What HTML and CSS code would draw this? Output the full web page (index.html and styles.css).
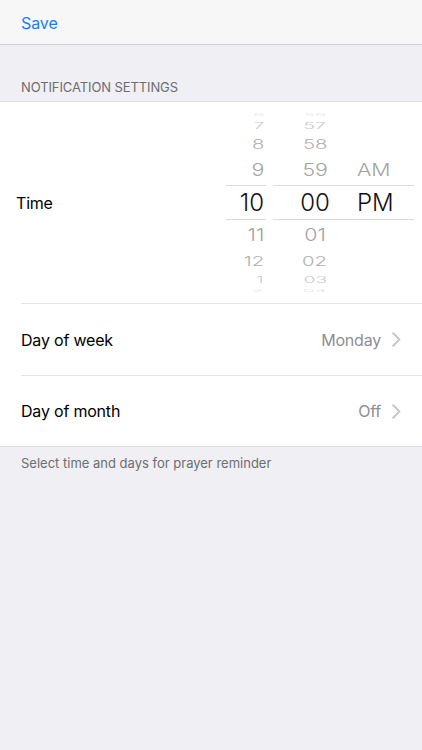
FILE: index.html
```html
<!DOCTYPE html>
<html>
<head>
<meta charset="utf-8">
<link rel="stylesheet" href="styles.css">
</head>
<body>
<div class="nav"><span class="save">Save</span></div>
<div class="section-header">NOTIFICATION SETTINGS</div>
<div class="group">
  <div class="cell">
    <div class="cell-body time-body">
      <div class="time-label">Time</div>
      <div class="picker">
        <div class="col hours">
          <div class="it d4"><span>6</span></div>
          <div class="it d3"><span>7</span></div>
          <div class="it d2"><span>8</span></div>
          <div class="it d1"><span>9</span></div>
          <div class="it d0"><span>10</span></div>
          <div class="it d1"><span>11</span></div>
          <div class="it d2"><span>12</span></div>
          <div class="it d3"><span>1</span></div>
          <div class="it d4"><span>2</span></div>
        </div>
        <div class="col mins">
          <div class="it d4"><span>56</span></div>
          <div class="it d3"><span>57</span></div>
          <div class="it d2"><span>58</span></div>
          <div class="it d1"><span>59</span></div>
          <div class="it d0"><span>00</span></div>
          <div class="it d1"><span>01</span></div>
          <div class="it d2"><span>02</span></div>
          <div class="it d3"><span>03</span></div>
          <div class="it d4"><span>04</span></div>
        </div>
        <div class="col ampm">
          <div class="it d4"></div>
          <div class="it d3"></div>
          <div class="it d2"></div>
          <div class="it d1"><span>AM</span></div>
          <div class="it d0"><span>PM</span></div>
          <div class="it d1"></div>
          <div class="it d2"></div>
          <div class="it d3"></div>
          <div class="it d4"></div>
        </div>
      </div>
    </div>
  </div>
  <div class="cell">
    <div class="cell-body row-body">
      <div class="label">Day of week</div>
      <div class="value">Monday</div>
      <svg class="chev" width="9" height="15" viewBox="0 0 9 15"><polyline points="1.2,1.2 7.5,7.5 1.2,13.8" fill="none" stroke="#c7c7cc" stroke-width="2" stroke-linecap="round" stroke-linejoin="round"/></svg>
    </div>
  </div>
  <div class="cell">
    <div class="cell-body row-body last">
      <div class="label">Day of month</div>
      <div class="value">Off</div>
      <svg class="chev" width="9" height="15" viewBox="0 0 9 15"><polyline points="1.2,1.2 7.5,7.5 1.2,13.8" fill="none" stroke="#c7c7cc" stroke-width="2" stroke-linecap="round" stroke-linejoin="round"/></svg>
    </div>
  </div>
</div>
<div class="footer">Select time and days for prayer reminder</div>
</body>
</html>
```
FILE: styles.css
```css
* { box-sizing: border-box; }
html, body { margin: 0; padding: 0; }
body {
  width: 422px;
  min-height: 750px;
  background: #efeff4;
  font-family: Inter, "Noto Sans", "Liberation Sans", sans-serif;
  color: #000;
}
.nav {
  height: 45px;
  background: #f7f7f7;
  border-bottom: 1px solid #cfcfd3;
  display: flex;
  align-items: center;
  padding-left: 21px;
  padding-top: 1px;
}
.save {
  font-size: 16px;
  color: #157efb;
  letter-spacing: -0.1px;
}
.section-header {
  height: 56px;
  display: flex;
  align-items: flex-end;
  padding: 0 21px 6px;
  font-size: 13px;
  line-height: 16px;
  color: #6d6d72;
  letter-spacing: -0.1px;
}
.group {
  background: #fff;
  border-top: 1px solid #dedee2;
  border-bottom: 1px solid #dedee2;
}
.cell { padding-left: 21px; }
.cell-body {
  display: flex;
  align-items: center;
  border-bottom: 1px solid #e3e3e6;
}
.cell-body.last { border-bottom: none; }
.time-body {
  height: 202px;
  padding-right: 8px;
}
.time-label {
  flex: 1;
  margin-left: -5px;
  font-size: 16px;
  letter-spacing: -0.2px;
}
.picker { display: flex; }
.col { display: flex; flex-direction: column; }
.hours { width: 40px; }
.mins { width: 91px; padding-left: 7px; }
.ampm { width: 57px; }
.it {
  display: flex;
  align-items: center;
  font-size: 22px;
  color: #a3a3a3;
  line-height: 1;
  font-weight: 300;
}
.hours .it { justify-content: flex-end; padding-right: 2px; }
.mins .it { justify-content: center; }
.ampm .it { justify-content: flex-start; }
.it span { display: inline-block; }
.hours .it span { transform-origin: right center; }
.ampm .it span { transform-origin: left center; }
.d0 {
  height: 35px;
  border-top: 1px solid #dcdcdc;
  border-bottom: 1px solid #dcdcdc;
  font-size: 24px;
  color: #111;
}
.d1 { height: 30px; }
.d1 span { transform: scale(0.97, 0.8); }
.d2 { height: 22px; color: #b0b0b0; }
.d2 span { transform: scale(0.92, 0.6); }
.d3 { height: 15px; color: #c9c9c9; }
.d3 span { transform: scale(0.88, 0.4); }
.d4 { height: 7px; color: #e6e6e6; overflow: hidden; }
.d4 span { transform: scale(0.85, 0.18); }
.row-body {
  height: 72px;
  padding-right: 21px;
}
.row-body.last { height: 70px; }
.label {
  flex: 1;
  font-size: 16px;
  letter-spacing: -0.2px;
}
.value {
  font-size: 16px;
  color: #8e8e93;
  letter-spacing: -0.2px;
  margin-right: 11px;
}
.chev { display: block; }
.footer {
  padding: 8px 21px 0;
  font-size: 13px;
  line-height: 16px;
  color: #6d6d72;
}
```
